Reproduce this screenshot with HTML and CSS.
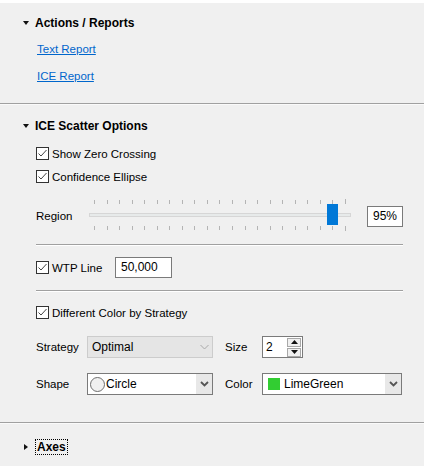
FILE: index.html
```html
<!DOCTYPE html>
<html>
<head>
<meta charset="utf-8">
<link rel="stylesheet" href="styles.css">
</head>
<body>
<div class="panel">
  <section class="sec sec-actions">
    <div class="hdr"><span class="tri-down"></span><span class="hdr-text">Actions / Reports</span></div>
    <a class="link link1" href="#">Text Report</a>
    <a class="link link2" href="#">ICE Report</a>
  </section>
  <div class="sep-full"></div>
  <section class="sec sec-ice">
    <div class="hdr"><span class="tri-down"></span><span class="hdr-text">ICE Scatter Options</span></div>
    <div class="body">
      <div class="cb-row cb1"><span class="cb"><svg width="11" height="11" viewBox="0 0 11 11"><polyline points="1.5,5.5 4,8 9.5,2" fill="none" stroke="#444" stroke-width="1"/></svg></span><span>Show Zero Crossing</span></div>
      <div class="cb-row cb2"><span class="cb"><svg width="11" height="11" viewBox="0 0 11 11"><polyline points="1.5,5.5 4,8 9.5,2" fill="none" stroke="#444" stroke-width="1"/></svg></span><span>Confidence Ellipse</span></div>
      <div class="slider-row">
        <span class="lbl">Region</span>
        <div class="slider">
          <div class="ticks ticks-top"><i></i><i></i><i></i><i></i><i></i><i></i><i></i><i></i><i></i><i></i><i></i><i></i><i></i><i></i><i></i><i></i><i></i><i></i><i></i><i></i><i class="long"></i></div>
          <div class="track"><div class="thumb"></div></div>
          <div class="ticks ticks-bottom"><i></i><i></i><i></i><i></i><i></i><i></i><i></i><i></i><i></i><i></i><i></i><i></i><i></i><i></i><i></i><i></i><i></i><i></i><i></i><i></i><i class="long"></i></div>
        </div>
        <div class="box pct">95%</div>
      </div>
      <div class="sep sep1"></div>
      <div class="wtp-row">
        <div class="cb-row wtp-cb"><span class="cb"><svg width="11" height="11" viewBox="0 0 11 11"><polyline points="1.5,5.5 4,8 9.5,2" fill="none" stroke="#444" stroke-width="1"/></svg></span><span>WTP Line</span></div>
        <div class="box wtp-input">50,000</div>
      </div>
      <div class="sep sep2"></div>
      <div class="cb-row cb3"><span class="cb"><svg width="11" height="11" viewBox="0 0 11 11"><polyline points="1.5,5.5 4,8 9.5,2" fill="none" stroke="#444" stroke-width="1"/></svg></span><span>Different Color by Strategy</span></div>
      <div class="form-row strat-row">
        <span class="lbl lbl-left">Strategy</span>
        <div class="select select-disabled">
          <span class="sel-text">Optimal</span>
          <span class="sel-btn"><svg width="9" height="6" viewBox="0 0 9 6"><polyline points="0.5,1 4.5,5 8.5,1" fill="none" stroke="#a8a8a8" stroke-width="1"/></svg></span>
        </div>
        <span class="lbl lbl-mid">Size</span>
        <div class="spinner">
          <span class="spin-text">2</span>
          <div class="spin-btns">
            <span class="spin-btn"><svg width="7" height="4" viewBox="0 0 7 4"><polygon points="0,4 3.5,0 7,4" fill="#111"/></svg></span>
            <span class="spin-btn"><svg width="7" height="4" viewBox="0 0 7 4"><polygon points="0,0 3.5,4 7,0" fill="#111"/></svg></span>
          </div>
        </div>
      </div>
      <div class="form-row shape-row">
        <span class="lbl lbl-left">Shape</span>
        <div class="select select-shape">
          <span class="circle-icon"></span>
          <span class="sel-text">Circle</span>
          <span class="sel-btn btn-dark"><svg width="9" height="6" viewBox="0 0 9 6"><polyline points="1,1 4.5,4.5 8,1" fill="none" stroke="#555" stroke-width="1.8"/></svg></span>
        </div>
        <span class="lbl lbl-mid">Color</span>
        <div class="select select-color">
          <span class="swatch"></span>
          <span class="sel-text">LimeGreen</span>
          <span class="sel-btn btn-dark"><svg width="9" height="6" viewBox="0 0 9 6"><polyline points="1,1 4.5,4.5 8,1" fill="none" stroke="#555" stroke-width="1.8"/></svg></span>
        </div>
      </div>
    </div>
  </section>
  <div class="sep-full sep-bottom"></div>
  <section class="sec sec-axes">
    <div class="hdr"><span class="tri-right"></span><span class="hdr-text focus">Axes</span></div>
  </section>
</div>
</body>
</html>
```
FILE: styles.css
```css
html, body {
  margin: 0;
  padding: 0;
  background: #ffffff;
}
body {
  font-family: "Segoe UI", "Liberation Sans", Arial, sans-serif;
  font-size: 11.5px;
  color: #000;
}
.panel {
  margin-top: 3px;
  width: 424px;
  height: 463px;
  background: #f0f0f0;
  display: flex;
  flex-direction: column;
}
.sec {
  display: flex;
  flex-direction: column;
}
.hdr {
  display: flex;
  align-items: center;
  height: 16px;
  padding-left: 23px;
}
.hdr-text {
  font-weight: bold;
  font-size: 12px;
  margin-left: 6px;
  line-height: 14px;
}
.tri-down {
  width: 0;
  height: 0;
  border-left: 3.5px solid transparent;
  border-right: 3.5px solid transparent;
  border-top: 4px solid #111;
}
.tri-right {
  width: 0;
  height: 0;
  margin-left: 1px;
  border-top: 3.5px solid transparent;
  border-bottom: 3.5px solid transparent;
  border-left: 4px solid #111;
}
.sec-actions {
  padding-top: 12px;
  padding-bottom: 19px;
}
.link {
  color: #0066cc;
  text-decoration: underline;
  margin-left: 37px;
  line-height: 16px;
  height: 16px;
  align-self: flex-start;
}
.link1 { margin-top: 10px; }
.link2 { margin-top: 11px; }
.sep-full {
  height: 1px;
  background: #a0a0a0;
  border-bottom: 1px solid #fafafa;
}
.sec-ice {
  padding-top: 13px;
}
.body {
  padding-left: 36px;
  width: 367px;
  display: flex;
  flex-direction: column;
}
.cb-row {
  display: flex;
  align-items: center;
  height: 13px;
}
.cb {
  width: 11px;
  height: 11px;
  border: 1px solid #333;
  background: #fff;
  margin-right: 3px;
  flex: none;
  display: flex;
}
.cb1 { margin-top: 13px; }
.cb2 { margin-top: 10px; }
.slider-row {
  display: flex;
  align-items: center;
  height: 35px;
  margin-top: 15px;
}
.slider-row .lbl {
  width: 51px;
  flex: none;
}
.slider {
  width: 266px;
  height: 35px;
  display: flex;
  flex-direction: column;
  flex: none;
}
.ticks {
  display: flex;
  justify-content: space-between;
  align-items: flex-end;
  width: 252px;
  margin-left: 7px;
  height: 5px;
}
.ticks i {
  width: 1px;
  height: 4px;
  background: #b4b4b4;
}
.ticks-top { margin-top: 1px; }
.ticks-bottom { margin-top: 9px; align-items: flex-start; }
.ticks i.long { height: 5px; }
.track {
  position: relative;
  margin-top: 9px;
  margin-left: 2px;
  width: 260px;
  height: 2px;
  background: #e7eaea;
  border: 1px solid #d6d6d6;
}
.thumb {
  position: absolute;
  left: 237px;
  top: -10px;
  width: 11px;
  height: 21px;
  background: #0078d7;
}
.box {
  background: #fff;
  border: 1px solid #7a7a7a;
  box-sizing: border-box;
  height: 21px;
  line-height: 19px;
  padding-left: 5px;
  font-size: 12px;
}
.pct {
  width: 37px;
  margin-left: 14px;
  margin-top: 1px;
}
.sep {
  height: 1px;
  background: #a0a0a0;
  border-bottom: 1px solid #fff;
}
.sep1 { margin-top: 11px; }
.wtp-row {
  display: flex;
  align-items: center;
  margin-top: 11px;
  height: 21px;
}
.wtp-cb {
  width: 79px;
  flex: none;
}
.wtp-input {
  width: 57px;
}
.sep2 { margin-top: 12px; }
.cb3 { margin-top: 14px; }
.form-row {
  display: flex;
  align-items: center;
  height: 22px;
}
.strat-row { margin-top: 17px; }
.shape-row { margin-top: 15px; }
.lbl-left {
  width: 51px;
  flex: none;
}
.lbl-mid {
  width: 37px;
  margin-left: 12px;
  flex: none;
}
.select {
  box-sizing: border-box;
  height: 22px;
  width: 126px;
  display: flex;
  align-items: center;
  border: 1px solid #7a7a7a;
  background: #fff;
  flex: none;
}
.select-disabled {
  background: #e5e5e5;
  border-color: #cccccc;
}
.sel-text {
  flex: 1;
  padding-left: 4px;
  font-size: 12px;
}
.sel-btn {
  width: 16px;
  height: 20px;
  display: flex;
  align-items: center;
  justify-content: center;
}
.btn-dark {
  background: #e8e8e8;
}
.circle-icon {
  width: 13px;
  height: 13px;
  border-radius: 50%;
  border: 1px solid #6e6e6e;
  background: #f0f0f0;
  margin-left: 2px;
  flex: none;
}
.select-shape .sel-text { padding-left: 1px; }
.select-color { width: 140px; }
.swatch {
  width: 12px;
  height: 12px;
  background: #32cd32;
  margin-left: 5px;
  flex: none;
}
.select-color .sel-text { padding-left: 4px; }
.spinner {
  box-sizing: border-box;
  width: 41px;
  height: 22px;
  border: 1px solid #7a7a7a;
  background: #fff;
  display: flex;
  align-items: center;
}
.spin-text {
  flex: 1;
  padding-left: 3px;
  font-size: 12px;
}
.spin-btns {
  display: flex;
  flex-direction: column;
  gap: 1px;
  margin-right: 1px;
}
.spin-btn {
  box-sizing: border-box;
  width: 14px;
  height: 9px;
  border: 1px solid #a8a8a8;
  background: #f0f0f0;
  display: flex;
  align-items: center;
  justify-content: center;
}
.sep-bottom { margin-top: 27px; }
.sec-axes {
  padding-top: 15px;
}
.focus {
  margin-left: 8px;
  outline: 1px dotted #000;
  outline-offset: 0;
  padding: 0 1px;
}
```
